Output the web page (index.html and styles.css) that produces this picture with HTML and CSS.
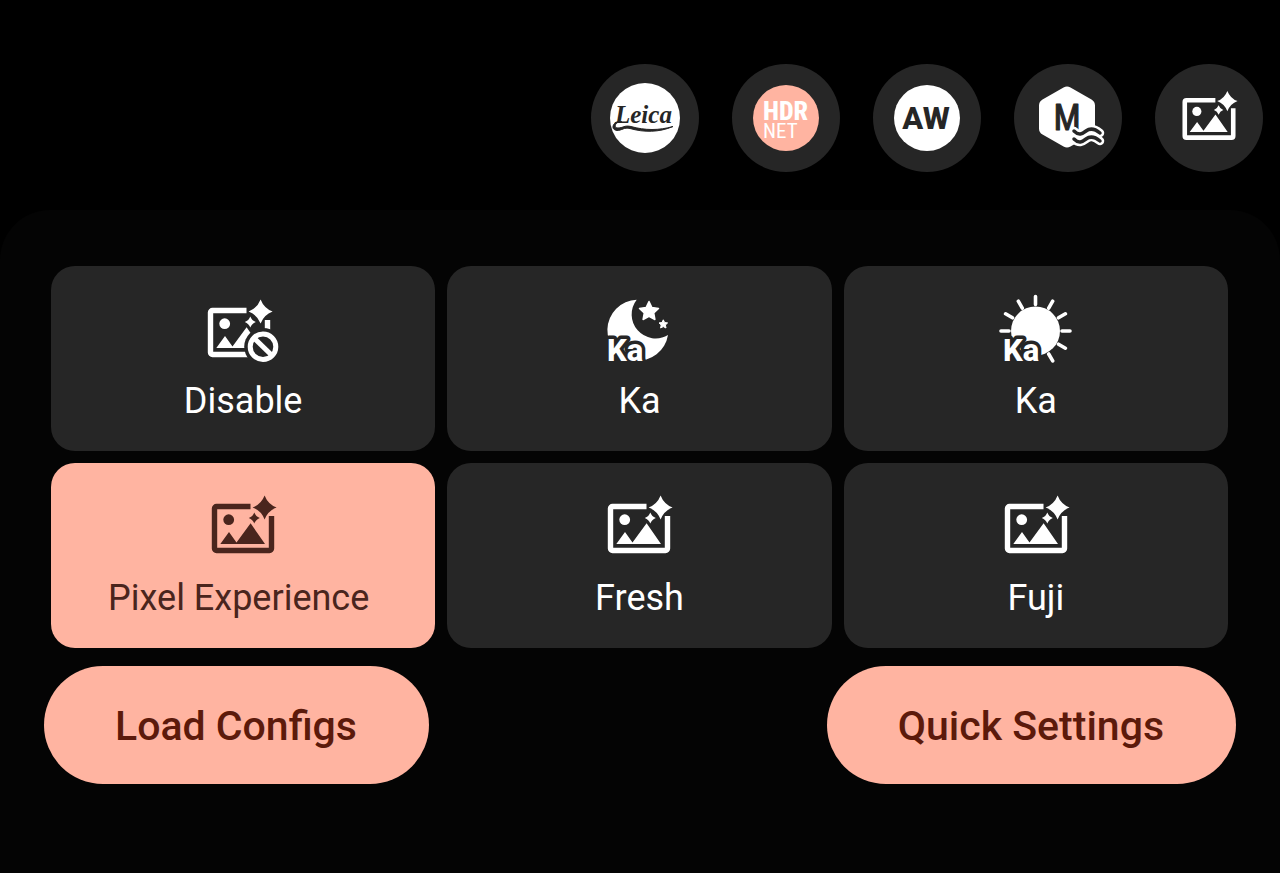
FILE: index.html
```html
<!DOCTYPE html>
<html lang="en">
<head>
  <meta charset="UTF-8">
  <meta name="viewport" content="width=device-width, initial-scale=1">
  <title>Camera Configs</title>
  <link rel="stylesheet" href="styles.css">
</head>
<body>
  <svg class="defs" aria-hidden="true">
    <symbol id="picture" viewBox="0 0 80 76">
      <path d="M47.5 16.5h-34a2 2 0 0 0-2 2v40a2 2 0 0 0 2 2h53a2 2 0 0 0 2-2V26" fill="none" stroke="currentColor" stroke-width="5.4"/>
      <circle cx="25.7" cy="29.7" r="5.4"/>
      <path d="M17.3 54 26 42l7.5 10.5L47.6 33.3 62 54z"/>
      <path d="M61.6 5.5q3.4 8.8 12 12-8.6 3.2-12 12-3.4-8.8-12-12 8.6-3.2 12-12z"/>
      <path d="M51.3 22.5q1.5 4 5.5 5.5-4 1.5-5.5 5.5-1.5-4-5.5-5.5 4-1.5 5.5-5.5z"/>
    </symbol>
  </svg>

  <div class="toolbar">
    <button class="round" aria-label="Leica">
      <svg class="badge" viewBox="0 0 80 80">
        <circle cx="40" cy="40" r="35" fill="#fff"/>
        <text class="leica" x="10" y="45">Leica</text>
        <path d="M17 44c-7-1-9 6-4 6 5 0 6-3 13-1.5 14 4 28 4 42 0-14 6-29 6-43 2-6-1.5-8 2-13 2-8-1-3-11 5-8.5z" fill="#262626" stroke="#262626"/>
      </svg>
    </button>
    <button class="round" aria-label="HDR NET">
      <svg class="badge" viewBox="0 0 80 80">
        <circle cx="40" cy="40" r="33" fill="#ffb4a1"/>
        <text class="hdr">
          <tspan x="17" y="42">HDR</tspan>
          <tspan class="net" x="17" y="60">NET</tspan>
        </text>
      </svg>
    </button>
    <button class="round" aria-label="AW">
      <svg class="badge" viewBox="0 0 80 80">
        <circle cx="40" cy="40" r="33" fill="#fff"/>
        <text class="aw" x="39" y="51" text-anchor="middle">AW</text>
      </svg>
    </button>
    <button class="round" aria-label="M waves">
      <svg class="badge" viewBox="0 0 80 80">
        <path d="M39 15.5 60 27.5v23L39 62.5 18 50.5v-23z" fill="#fff" stroke="#fff" stroke-width="14" stroke-linejoin="round"/>
        <text class="mono" x="39" y="52" text-anchor="middle">M</text>
        <g fill="none" stroke-linecap="round" stroke-linejoin="round">
          <path d="M46 53c5 5 8 3 12 0s8-3 14 2M46 61c5 5 8 3 12 0s8-3 14 2" stroke="#fff" stroke-width="8.5"/>
          <path d="M46 53c5 5 8 3 12 0s8-3 14 2M46 61c5 5 8 3 12 0s8-3 14 2" stroke="#262626" stroke-width="3.5"/>
        </g>
      </svg>
    </button>
    <button class="round" aria-label="Picture style">
      <svg class="small-icon"><use href="#picture"/></svg>
    </button>
  </div>

  <main class="panel">
    <div class="grid">
      <button class="tile">
        <svg class="icon" viewBox="0 0 80 76">
          <mask id="cut">
            <rect width="80" height="76" fill="#fff"/>
            <circle cx="60" cy="53.7" r="18.8" fill="#000"/>
          </mask>
          <g mask="url(#cut)"><use href="#picture" x="-4" y="1" width="80" height="76"/></g>
          <circle cx="60" cy="53.7" r="12.8" fill="none" stroke="currentColor" stroke-width="5"/>
          <path d="m51 45 18 17.5" stroke="currentColor" stroke-width="5"/>
        </svg>
        <span>Disable</span>
      </button>
      <button class="tile">
        <svg class="icon" viewBox="0 0 80 76">
          <path d="M37.7 6.7A24 24 0 0 0 69 42 30.5 30.5 0 1 1 37.7 6.7z"/>
          <path d="m50 8.5 2.9 6 6.6.9-4.8 4.6 1.2 6.5-5.9-3.1-5.9 3.1 1.2-6.5-4.8-4.6 6.6-.9z" stroke="currentColor" stroke-width="1.5" stroke-linejoin="round"/>
          <path d="m64.3 26.8 1.3 2.7 3 .4-2.2 2.1.6 3-2.7-1.4-2.7 1.4.6-3-2.2-2.1 3-.4z" stroke="currentColor" stroke-linejoin="round"/>
          <text class="ka-halo" x="8" y="68">Ka</text>
        </svg>
        <span>Ka</span>
      </button>
      <button class="tile">
        <svg class="icon" viewBox="0 0 80 76">
          <circle cx="39.5" cy="38" r="24.5"/>
          <path d="M39.5 3.5v8M56.7 8.2l-4 6.9M69.4 20.8l-6.9 4M74 38h-8M69.4 55.2l-6.9-4M56.7 67.9l-4-6.9M5 38h8M9.6 20.8l6.9 4M22.3 8.2l4 6.9" stroke="currentColor" stroke-width="3.6" stroke-linecap="round"/>
          <text class="ka-halo" x="7" y="68">Ka</text>
        </svg>
        <span>Ka</span>
      </button>
      <button class="tile active">
        <svg class="icon"><use href="#picture"/></svg>
        <span>Pixel Experience&nbsp;</span>
      </button>
      <button class="tile">
        <svg class="icon"><use href="#picture"/></svg>
        <span>Fresh</span>
      </button>
      <button class="tile">
        <svg class="icon"><use href="#picture"/></svg>
        <span>Fuji</span>
      </button>
    </div>
    <div class="actions">
      <button class="pill">Load Configs</button>
      <button class="pill">Quick Settings</button>
    </div>
  </main>
</body>
</html>
```
FILE: styles.css
```css
* { box-sizing: border-box; }
body { margin: 0; min-height: 100vh; display: flex; flex-direction: column; background: #000; font-family: Roboto, sans-serif; }
button { border: 0; padding: 0; font-family: inherit; cursor: pointer; }
svg { display: block; fill: currentColor; }
.defs { position: absolute; width: 0; height: 0; }

.toolbar { display: flex; justify-content: flex-end; gap: 33px; padding: 64px 17px 38px; }
.round { width: 108px; height: 108px; border-radius: 50%; background: #262626; color: #fff; display: flex; align-items: center; justify-content: center; }
.badge { width: 80px; height: 80px; }
.small-icon { width: 68px; height: 65px; }
.leica { font: italic bold 25px "Liberation Serif", serif; fill: #262626; }
.hdr { font-family: "Roboto Condensed", Roboto, sans-serif; font-size: 26px; font-weight: 800; fill: #fff; }
.net { font-size: 21px; font-weight: 400; }
.aw { font-size: 31px; font-weight: 800; fill: #262626; }
.mono { font-family: "Roboto Condensed", Roboto, sans-serif; font-size: 36px; font-weight: 400; fill: #262626; stroke: #262626; stroke-width: 1px; stroke-linejoin: round; }

.panel { flex: 1; padding: 56px 44px 88px; border-radius: 50px 50px 0 0; background: #040404; }
.grid { display: grid; grid-template-columns: repeat(3, 1fr); gap: 12px; padding: 0 8px 0 7px; }
.tile { height: 185px; padding-top: 27px; border-radius: 24px; background: #262626; color: #fff; display: flex; flex-direction: column; align-items: center; font-size: 36px; font-weight: 400; line-height: 44px; }
.tile span { margin-top: 10px; }
.icon { width: 80px; height: 76px; }
.active { background: #ffb4a1; color: #4a251d; }
.ka-halo { font-size: 31px; font-weight: 800; stroke: #262626; stroke-width: 7px; stroke-linejoin: round; paint-order: stroke; }

.actions { display: flex; justify-content: space-between; margin-top: 18px; }
.pill { height: 118px; padding: 2px 72px 0 71px; border-radius: 59px; background: #ffb4a1; color: #5c1a0b; font-size: 41px; font-weight: 500; }
```
